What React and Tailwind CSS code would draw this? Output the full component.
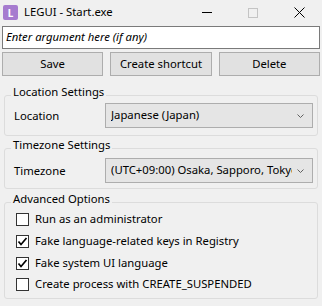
import React from "react";

const font = { fontFamily: '"Noto Sans", "Segoe UI", sans-serif' };

function Chevron() {
  return (
    <svg width="7" height="4" viewBox="0 0 7 4" className="shrink-0">
      <path d="M0.5 0.5 L3.5 3.5 L6.5 0.5" fill="none" stroke="#606060" strokeWidth="1" />
    </svg>
  );
}

function Combo({ text }) {
  return (
    <div className="flex-1 min-w-0 h-[25px] bg-[#e5e5e5] border border-[#adadad] flex items-center pl-[5px] pr-[8px] text-[11.3px] text-black">
      <span className="flex-1 min-w-0 mr-[5px] overflow-hidden whitespace-nowrap">{text}</span>
      <Chevron />
    </div>
  );
}

function Check({ checked, label }) {
  return (
    <div className="h-[21.7px] flex items-center">
      <div className="w-[13px] h-[13px] border border-[#333333] bg-white flex items-center justify-center">
        {checked && (
          <svg width="11" height="11" viewBox="0 0 11 11">
            <path d="M1.5 5.5 L4 8.5 L9.5 2" fill="none" stroke="#000" strokeWidth="1.7" />
          </svg>
        )}
      </div>
      <span className="ml-[6px] text-[11.3px] text-black whitespace-nowrap">{label}</span>
    </div>
  );
}

function Group({ title, className, children }) {
  return (
    <div className={"relative mx-[4px] border border-[#dcdcdc] rounded-[3px] " + className}>
      <span className="absolute left-[6px] top-[-12px] px-[2px] bg-[#f0f0f0] text-[11.3px] leading-[16px] text-black">
        {title}
      </span>
      {children}
    </div>
  );
}

export default function App() {
  return (
    <div className="w-[322px] h-[306px] bg-[#f0f0f0] overflow-hidden flex flex-col" style={font}>
      {/* Title bar */}
      <div className="h-[25px] flex items-center shrink-0">
        <div className="ml-[3px] w-[15px] h-[15px] rounded-[2px] bg-[#a67bcf] flex items-center justify-center text-white text-[10px] font-bold leading-none">
          L
        </div>
        <span className="ml-[6px] text-[11.3px] text-black">LEGUI - Start.exe</span>
        <div className="flex-1" />
        <div className="w-[46px] h-[25px] flex items-center justify-center">
          <div className="w-[10px] h-[1px] bg-black" />
        </div>
        <div className="w-[46px] h-[25px] flex items-center justify-center">
          <div className="w-[10px] h-[10px] border border-[#c4c4c4]" />
        </div>
        <div className="w-[46px] h-[25px] flex items-center justify-center">
          <svg width="11" height="11" viewBox="0 0 11 11">
            <path d="M0.5 0.5 L10.5 10.5 M10.5 0.5 L0.5 10.5" stroke="#000" strokeWidth="1" />
          </svg>
        </div>
      </div>

      {/* Argument input */}
      <div className="mx-[2px] mt-[1px] h-[23px] bg-white border border-[#7a7a7a] flex items-center pl-[3px] text-[11.3px] italic text-black">
        Enter argument here (if any)
      </div>

      {/* Buttons */}
      <div className="mx-[2px] mt-[3px] h-[24px] flex gap-[7px]">
        {["Save", "Create shortcut", "Delete"].map((b) => (
          <div
            key={b}
            className="flex-1 bg-[#e1e1e1] border border-[#adadad] flex items-center justify-center text-[11.3px] text-black"
          >
            {b}
          </div>
        ))}
      </div>

      <Group title="Location Settings" className="mt-[19px] h-[41px]">
        <div className="flex items-center pt-[7px] pl-[9px] pr-[4px]">
          <span className="w-[91px] shrink-0 text-[11.3px] text-black pt-[2px]">Location</span>
          <Combo text="Japanese (Japan)" />
        </div>
      </Group>

      <Group title="Timezone Settings" className="mt-[12px] h-[41px]">
        <div className="flex items-center pt-[9px] pl-[9px] pr-[4px]">
          <span className="w-[91px] shrink-0 text-[11.3px] text-black pt-[2px]">Timezone</span>
          <Combo text="(UTC+09:00) Osaka, Sapporo, Tokyo" />
        </div>
      </Group>

      <Group title="Advanced Options" className="mt-[13px] h-[97px]">
        <div className="flex flex-col pt-[6px] pl-[11px]">
          <Check label="Run as an administrator" />
          <Check checked label="Fake language-related keys in Registry" />
          <Check checked label="Fake system UI language" />
          <Check label="Create process with CREATE_SUSPENDED" />
        </div>
      </Group>
    </div>
  );
}
